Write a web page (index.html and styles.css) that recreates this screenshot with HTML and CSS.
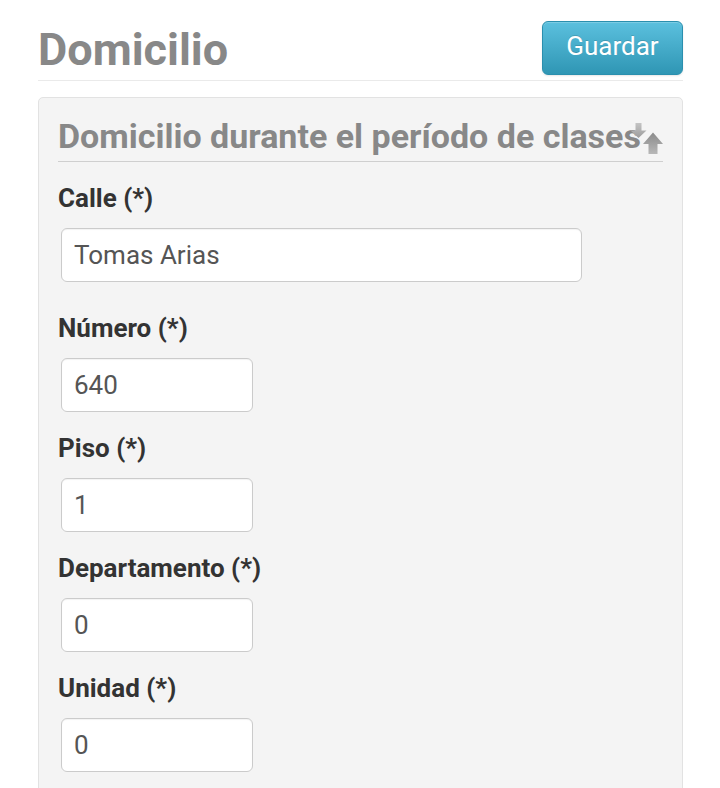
FILE: index.html
```html
<!DOCTYPE html>
<html lang="es">
<head>
<meta charset="utf-8">
<title>Domicilio</title>
<link rel="stylesheet" href="styles.css">
</head>
<body>
<div class="page">
  <div class="page-header">
    <h1 class="page-title">Domicilio</h1>
    <button class="btn-info" type="button">Guardar</button>
  </div>
  <div class="panel">
    <h2 class="panel-title">Domicilio durante el período de clases
      <svg class="sort-icon" width="32" height="34" viewBox="0 0 32 34" aria-hidden="true">
        <defs>
          <linearGradient id="gDown" x1="0" y1="0" x2="0" y2="1">
            <stop offset="0" stop-color="#c4c4c4"/>
            <stop offset="1" stop-color="#9c9c9c"/>
          </linearGradient>
          <linearGradient id="gUp" x1="0" y1="0" x2="0" y2="1">
            <stop offset="0" stop-color="#8a8a8a"/>
            <stop offset="1" stop-color="#b8b8b8"/>
          </linearGradient>
        </defs>
        <path d="M4.5 1h6v7.5h5L7.5 16 -0.5 8.5h5z" fill="url(#gDown)"/>
        <path d="M17.5 32V22h-5.5l10-11.5 10 11.5h-5.5v10z" fill="url(#gUp)"/>
      </svg>
    </h2>
    <div class="field first">
      <label class="field-label">Calle (*)</label>
      <input class="field-input wide" type="text" value="Tomas Arias">
    </div>
    <div class="field">
      <label class="field-label">Número (*)</label>
      <input class="field-input short" type="text" value="640">
    </div>
    <div class="field">
      <label class="field-label">Piso (*)</label>
      <input class="field-input short" type="text" value="1">
    </div>
    <div class="field">
      <label class="field-label">Departamento (*)</label>
      <input class="field-input short" type="text" value="0">
    </div>
    <div class="field">
      <label class="field-label">Unidad (*)</label>
      <input class="field-input short" type="text" value="0">
    </div>
  </div>
</div>
</body>
</html>
```
FILE: styles.css
```css
html, body {
  margin: 0;
  padding: 0;
  background: #fff;
}
body {
  font-family: Roboto, "Liberation Sans", sans-serif;
  color: #333;
}
.page {
  padding: 21px 37px 0 38px;
}
.page-header {
  display: flex;
  justify-content: space-between;
  align-items: center;
  padding-bottom: 5px;
  border-bottom: 1px solid #eaeaea;
  margin-bottom: 16px;
}
.page-title {
  margin: 0;
  font-size: 45px;
  font-weight: 700;
  line-height: 54px;
  color: #888;
  position: relative;
  top: 2px;
}
.btn-info {
  width: 141px;
  height: 54px;
  border: 1px solid #2a8fae;
  border-radius: 6px;
  background: linear-gradient(#5bc0de, #2f96b4);
  color: #fff;
  font-family: Roboto, "Liberation Sans", sans-serif;
  font-size: 26px;
  padding: 0 0 4px;
  box-shadow: inset 0 1px 0 rgba(255,255,255,0.2), 0 1px 2px rgba(0,0,0,0.1);
  text-shadow: 0 -1px 0 rgba(0,0,0,0.15);
}
.panel {
  background: #f4f4f4;
  border: 1px solid #e2e2e2;
  border-radius: 5px;
  padding: 19px 19px 40px;
}
.panel-title {
  position: relative;
  margin: 0 0 21px;
  font-size: 34px;
  font-weight: 700;
  line-height: 38px;
  color: #888;
  padding-bottom: 6px;
  border-bottom: 1px solid #cfcfcf;
  white-space: nowrap;
}
.sort-icon {
  position: absolute;
  right: 0;
  top: 5px;
}
.field {
  display: flex;
  flex-direction: column;
  align-items: flex-start;
  margin-bottom: 21px;
}
.field.first {
  margin-bottom: 31px;
}
.field-label {
  font-size: 26px;
  font-weight: 700;
  line-height: 30px;
  color: #333;
  margin-bottom: 15px;
}
.field-input {
  box-sizing: border-box;
  height: 54px;
  margin-left: 3px;
  padding: 0 12px;
  border: 1px solid #cbcbcb;
  border-radius: 6px;
  background: #fff;
  font-family: Roboto, "Liberation Sans", sans-serif;
  font-size: 26px;
  color: #555;
  box-shadow: inset 0 1px 1px rgba(0,0,0,0.05);
}
.field-input.wide {
  width: 521px;
}
.field-input.short {
  width: 192px;
}
```
